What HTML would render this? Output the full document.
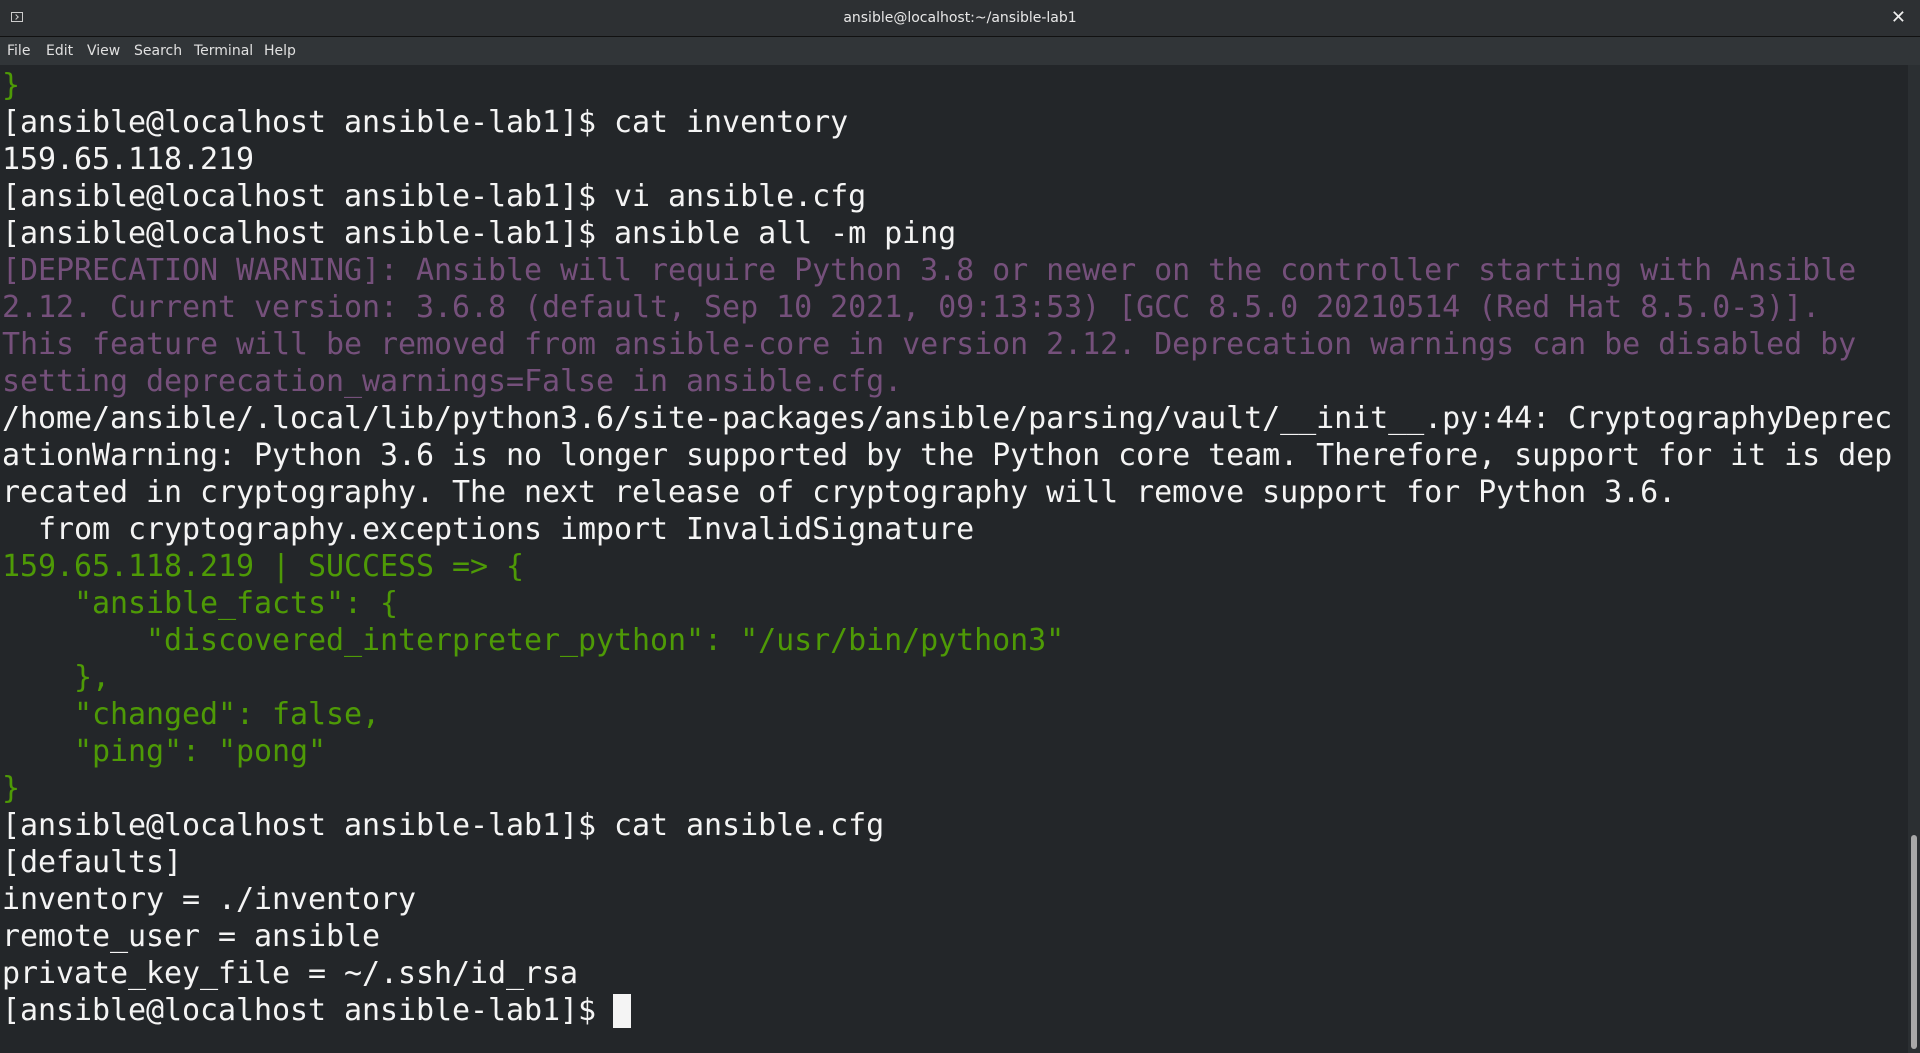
<!DOCTYPE html>
<html><head><meta charset="utf-8"><style>
html,body{margin:0;padding:0;width:1920px;height:1053px;overflow:hidden;background:#232629;}
#title{position:absolute;left:0;top:0;width:1920px;height:36px;background:#2d3033;border-bottom:1px solid #111;}
#title .t{position:absolute;left:0;width:1920px;top:10px;text-align:center;color:#e8e8e8;font:14px "DejaVu Sans","Liberation Sans",sans-serif;}
#title .ic{position:absolute;left:11px;top:12px;width:12px;height:10px;border:1px solid #ccc;box-sizing:border-box;}
#title .ic:after{content:"";position:absolute;left:2px;top:2px;width:3px;height:3px;border-right:1px solid #ccc;border-bottom:1px solid #ccc;transform:rotate(-45deg);}
#title .x{position:absolute;right:14px;top:7px;color:#eee;font:bold 18px "DejaVu Sans",sans-serif;}
#menu{position:absolute;left:0;top:37px;width:1920px;height:28px;background:#313538;font:14px "DejaVu Sans","Liberation Sans",sans-serif;color:#e0e0e0;}
#menu span{position:absolute;top:6px;}
#term{position:absolute;left:2px;top:67px;margin:0;font:30px "DejaVu Sans Mono","Liberation Mono",monospace;line-height:37px;letter-spacing:-0.06px;color:#f4f4f4;white-space:pre;}
.p{color:#75507b}.g{color:#4e9a06}
#sb{position:absolute;left:1908px;top:65px;width:12px;height:988px;background:#2b2f32;}
#thumb{position:absolute;left:1911px;top:835px;width:6px;height:214px;background:#a8a8a8;border-radius:3px;}
#cur{position:absolute;left:613px;top:994px;width:18px;height:34px;background:#f4f4f4;}
</style></head><body>
<div id="title"><div class="ic"></div><div class="t">ansible@localhost:~/ansible-lab1</div><div class="x">✕</div></div>
<div id="menu"><span style="left:7px">File</span><span style="left:46px">Edit</span><span style="left:87px">View</span><span style="left:134px">Search</span><span style="left:194px">Terminal</span><span style="left:264px">Help</span></div>
<pre id="term"><span class="g">}</span>
[ansible@localhost ansible-lab1]$ cat inventory
159.65.118.219
[ansible@localhost ansible-lab1]$ vi ansible.cfg
[ansible@localhost ansible-lab1]$ ansible all -m ping
<span class="p">[DEPRECATION WARNING]: Ansible will require Python 3.8 or newer on the controller starting with Ansible
2.12. Current version: 3.6.8 (default, Sep 10 2021, 09:13:53) [GCC 8.5.0 20210514 (Red Hat 8.5.0-3)].
This feature will be removed from ansible-core in version 2.12. Deprecation warnings can be disabled by
setting deprecation_warnings=False in ansible.cfg.</span>
/home/ansible/.local/lib/python3.6/site-packages/ansible/parsing/vault/__init__.py:44: CryptographyDeprec
ationWarning: Python 3.6 is no longer supported by the Python core team. Therefore, support for it is dep
recated in cryptography. The next release of cryptography will remove support for Python 3.6.
  from cryptography.exceptions import InvalidSignature
<span class="g">159.65.118.219 | SUCCESS =&gt; {
    "ansible_facts": {
        "discovered_interpreter_python": "/usr/bin/python3"
    },
    "changed": false,
    "ping": "pong"
}</span>
[ansible@localhost ansible-lab1]$ cat ansible.cfg
[defaults]
inventory = ./inventory
remote_user = ansible
private_key_file = ~/.ssh/id_rsa
[ansible@localhost ansible-lab1]$ </pre>
<div id="cur"></div>
<div id="sb"></div><div id="thumb"></div>
</body></html>
